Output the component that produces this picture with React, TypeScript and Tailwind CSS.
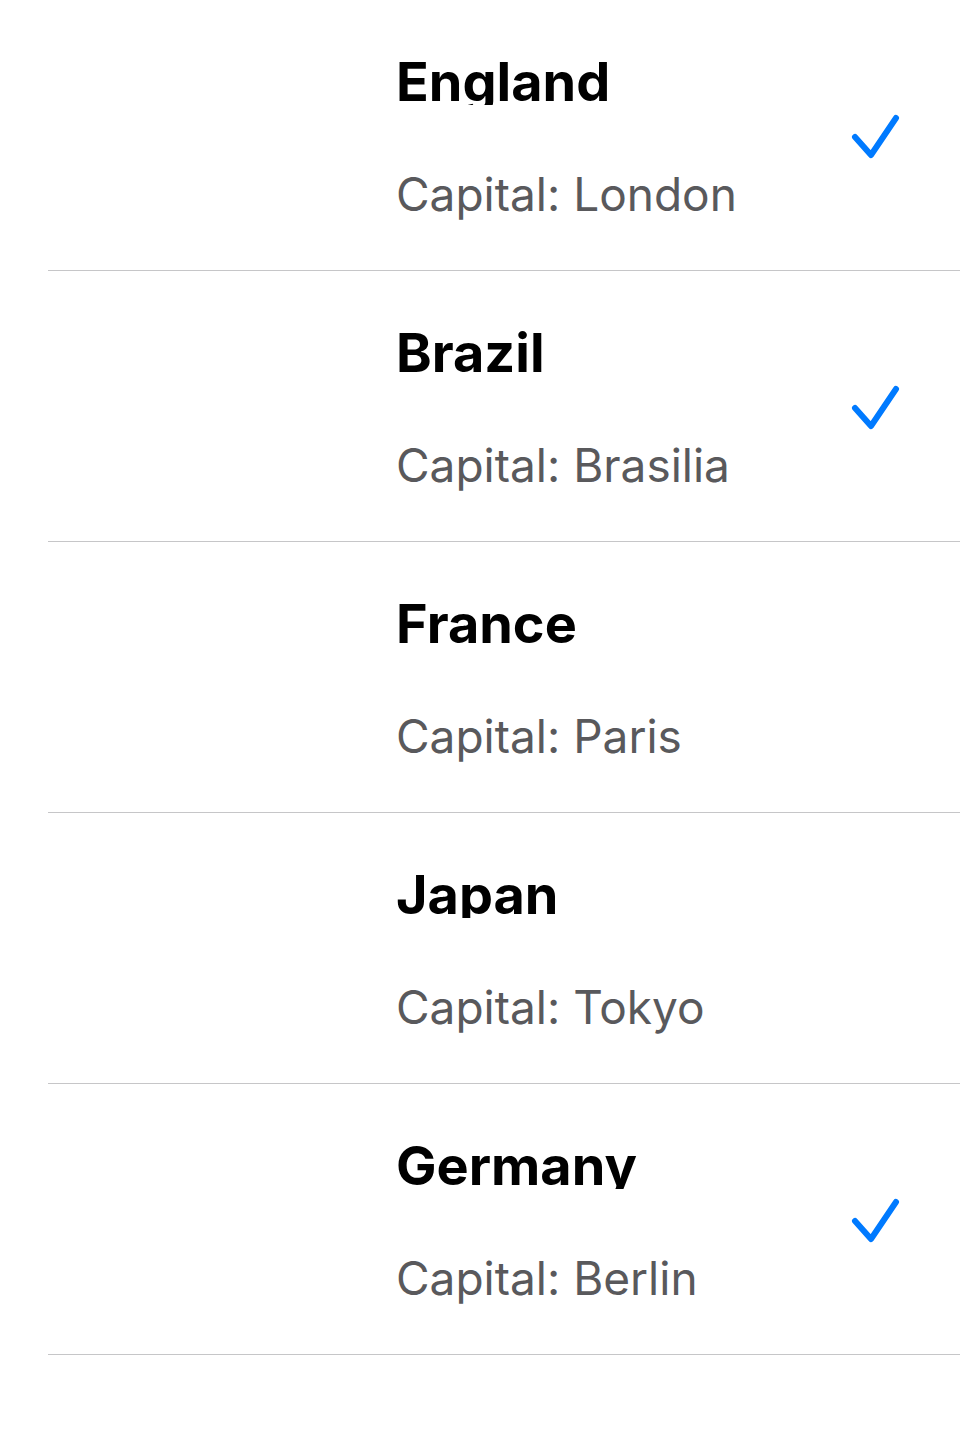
const countries = [
  { name: "England", capital: "London", checked: true },
  { name: "Brazil", capital: "Brasilia", checked: true },
  { name: "France", capital: "Paris", checked: false },
  { name: "Japan", capital: "Tokyo", checked: false },
  { name: "Germany", capital: "Berlin", checked: true },
];

function Check() {
  return (
    <svg width="52" height="50" viewBox="0 0 52 50" fill="none">
      <path
        d="M5 24 L21 42 L46 5"
        stroke="#007aff"
        strokeWidth="6"
        strokeLinecap="round"
        strokeLinejoin="round"
      />
    </svg>
  );
}

function App() {
  return (
    <div className="w-[960px] h-[1440px] bg-white pl-[48px] font-['Inter',sans-serif]">
      {countries.map((c) => (
        <div key={c.name} className="flex h-[271px] border-b border-[#c6c6c8]">
          {/* text */}
          <div className="flex-1 pl-[348px]">
            <div className="mt-[55px] h-[50px] overflow-hidden text-[54px] leading-none font-bold text-black">
              {c.name}
            </div>
            <div className="mt-[66px] text-[46px] leading-none text-[#59595c]">
              Capital: {c.capital}
            </div>
          </div>
          {/* check */}
          <div className="w-[110px] flex items-center pt-[6px]">
            {c.checked && <Check />}
          </div>
        </div>
      ))}
    </div>
  );
}

export default App;
